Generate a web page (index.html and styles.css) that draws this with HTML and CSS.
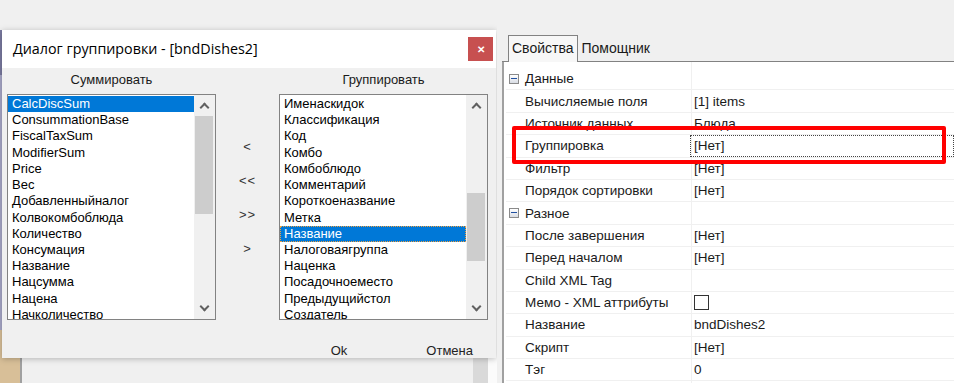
FILE: index.html
```html
<!DOCTYPE html>
<html lang="ru">
<head>
    <meta charset="UTF-8">
    <title>Диалог группировки</title>
    <link rel="stylesheet" href="styles.css">
</head>
<body>
<div class="desk">
    <div class="left-area">
        <div class="back-app">
            <div class="back-side"></div>
            <div class="back-line"></div>
            <div class="back-main"></div>
            <div class="back-scroll"></div>
            <div class="back-gap"></div>
        </div>

        <div class="dialog">
            <div class="dlg-title">
                <span class="dlg-caption">Диалог группировки - [bndDishes2]</span>
                <span class="dlg-close">&#x2715;</span>
            </div>
            <div class="dlg-body">
                <div class="dlg-lists">
                    <div class="list-col">
                        <div class="list-label">Суммировать</div>
                        <div class="listbox">
                            <ul class="items">
                                <li class="selected">CalcDiscSum</li>
                                <li>ConsummationBase</li>
                                <li>FiscalTaxSum</li>
                                <li>ModifierSum</li>
                                <li>Price</li>
                                <li>Вес</li>
                                <li>Добавленныйналог</li>
                                <li>Колвокомбоблюда</li>
                                <li>Количество</li>
                                <li>Консумация</li>
                                <li>Название</li>
                                <li>Нацсумма</li>
                                <li>Нацена</li>
                                <li>Начколичество</li>
                            </ul>
                            <div class="vscroll">
                                <span class="arrow up"></span>
                                <div class="track"><div class="thumb thumb-left"></div></div>
                                <span class="arrow down"></span>
                            </div>
                        </div>
                    </div>

                    <div class="move-btns">
                        <span class="move">&lt;</span>
                        <span class="move">&lt;&lt;</span>
                        <span class="move">&gt;&gt;</span>
                        <span class="move">&gt;</span>
                    </div>

                    <div class="list-col">
                        <div class="list-label">Группировать</div>
                        <div class="listbox">
                            <ul class="items">
                                <li>Именаскидок</li>
                                <li>Классификация</li>
                                <li>Код</li>
                                <li>Комбо</li>
                                <li>Комбоблюдо</li>
                                <li>Комментарий</li>
                                <li>Короткоеназвание</li>
                                <li>Метка</li>
                                <li class="selected focused">Название</li>
                                <li>Налоговаягруппа</li>
                                <li>Наценка</li>
                                <li>Посадочноеместо</li>
                                <li>Предыдущийстол</li>
                                <li>Создатель</li>
                            </ul>
                            <div class="vscroll">
                                <span class="arrow up"></span>
                                <div class="track"><div class="thumb thumb-right"></div></div>
                                <span class="arrow down"></span>
                            </div>
                        </div>
                    </div>
                </div>
                <div class="dlg-buttons">
                    <span class="dlg-btn ok">Ok</span>
                    <span class="dlg-btn cancel">Отмена</span>
                </div>
            </div>
        </div>
    </div>

    <div class="props">
        <div class="tabs">
            <span class="tab active">Свойства</span>
            <span class="tab">Помощник</span>
        </div>
        <div class="grid">
            <div class="row cat"><span class="minus"></span>Данные</div>
            <div class="row"><span class="name">Вычисляемые поля</span><span class="value">[1] items</span></div>
            <div class="row"><span class="name">Источник данных</span><span class="value">Блюда</span></div>
            <div class="row"><span class="name">Группировка</span><span class="value focus">[Нет]</span></div>
            <div class="row"><span class="name">Фильтр</span><span class="value">[Нет]</span></div>
            <div class="row"><span class="name">Порядок сортировки</span><span class="value">[Нет]</span></div>
            <div class="row cat"><span class="minus"></span>Разное</div>
            <div class="row"><span class="name">После завершения</span><span class="value">[Нет]</span></div>
            <div class="row"><span class="name">Перед началом</span><span class="value">[Нет]</span></div>
            <div class="row"><span class="name">Child XML Tag</span><span class="value"></span></div>
            <div class="row"><span class="name">Мемо - XML аттрибуты</span><span class="value"><span class="check"></span></span></div>
            <div class="row"><span class="name">Название</span><span class="value">bndDishes2</span></div>
            <div class="row"><span class="name">Скрипт</span><span class="value">[Нет]</span></div>
            <div class="row"><span class="name">Тэг</span><span class="value">0</span></div>
            <div class="row"><span class="name"></span><span class="value"></span></div>
        </div>
        <div class="highlight"></div>
    </div>
</div>
</body>
</html>
```

FILE: styles.css
```css
* {
    box-sizing: border-box;
}
body {
    margin: 0;
    background-color: #f0f0f0;
    font-family: 'Liberation Sans', Arial, sans-serif;
    font-size: 13px;
    color: #000;
}
.desk {
    display: flex;
    width: 954px;
    height: 383px;
    overflow: hidden;
}

/* application behind the dialog */
.left-area {
    position: relative;
    width: 497px;
    height: 383px;
    flex-shrink: 0;
}
.back-app {
    display: flex;
    height: 100%;
    padding-top: 30px;
}
.back-side {
    width: 20px;
    background: linear-gradient(#7a7aa0 0, #7a7aa0 45px, #a8a8c8 45px, #a8a8c8 300px, #d8bf98 300px);
}
.back-line {
    width: 2px;
    background-color: #a0a0a0;
}
.back-main {
    flex: 1;
    background-color: #f0f0f0;
}
.back-scroll {
    width: 15px;
    background-color: #d9d9d9;
}
.back-gap {
    width: 9px;
    background-color: #fbfbfb;
}

/* dialog window */
.dialog {
    position: absolute;
    left: 2px;
    top: 30px;
    width: 494px;
    height: 328px;
    background-color: #f0f0f0;
    box-shadow: 0 1px 6px rgba(0, 0, 0, 0.25);
    display: flex;
    flex-direction: column;
}
.dlg-title {
    height: 38px;
    background-color: #fff;
    display: flex;
    align-items: center;
    justify-content: space-between;
    padding-left: 11px;
    padding-right: 3px;
}
.dlg-caption {
    font-family: 'Open Sans', 'Liberation Sans', sans-serif;
    font-size: 14.3px;
    margin-top: -1px;
}
.dlg-close {
    width: 25px;
    height: 24px;
    background-color: #c75050;
    color: #fff;
    font-size: 10px;
    font-weight: bold;
    display: flex;
    align-items: center;
    justify-content: center;
}
.dlg-body {
    flex: 1;
    display: flex;
    flex-direction: column;
}
.dlg-lists {
    display: flex;
    padding: 4px 6px 0 5px;
}
.list-col {
    width: 209px;
    display: flex;
    flex-direction: column;
}
.list-label {
    text-align: center;
    height: 22px;
    line-height: 16px;
    color: #1a1a1a;
}
.listbox {
    height: 226px;
    border: 1px solid #828282;
    background-color: #fff;
    display: flex;
    overflow: hidden;
}
.items {
    list-style: none;
    margin: 0;
    padding: 1px 0 0 0;
    flex: 1;
    overflow: hidden;
}
.items li {
    height: 16.23px;
    line-height: 16px;
    padding-left: 4px;
    white-space: nowrap;
}
.items li.selected {
    background-color: #0078d7;
    color: #fff;
}
.items li.focused {
    outline: 1px dotted #f0a040;
    outline-offset: -1px;
}
.vscroll {
    width: 21px;
    background-color: #f0f0f0;
    display: flex;
    flex-direction: column;
    align-items: center;
}
.track {
    flex: 1;
    width: 100%;
    position: relative;
}
.thumb {
    position: absolute;
    left: 1px;
    right: 2px;
    background-color: #cdcdcd;
}
.thumb-left {
    top: 0;
    height: 98px;
}
.thumb-right {
    top: 77px;
    height: 68px;
}
.arrow {
    width: 21px;
    height: 21px;
    display: block;
    position: relative;
}
.arrow::after {
    content: "";
    position: absolute;
    left: 7px;
    width: 5px;
    height: 5px;
    border-left: 2px solid #606060;
    border-top: 2px solid #606060;
}
.arrow.up::after {
    top: 9px;
    transform: rotate(45deg);
}
.arrow.down::after {
    top: 5px;
    transform: rotate(225deg);
}

.move-btns {
    width: 63px;
    display: flex;
    flex-direction: column;
    align-items: center;
    padding-top: 66px;
    gap: 17px;
}
.move {
    height: 17px;
    line-height: 17px;
    color: #333;
    font-size: 13px;
    letter-spacing: 1px;
}

.dlg-buttons {
    display: flex;
    justify-content: flex-end;
    padding: 23px 23px 0 0;
    gap: 79px;
}
.dlg-btn {
    color: #222;
    font-size: 13px;
}

/* property panel */
.props {
    position: relative;
    flex: 1;
    display: flex;
    flex-direction: column;
    padding-top: 35px;
    padding-left: 5px;
    background-color: #f0f0f0;
}
.tabs {
    display: flex;
    flex-shrink: 0;
    padding-left: 6px;
    height: 27px;
    border-bottom: 1px solid #828282;
}
.tab {
    padding: 5px 4px 0 3px;
    font-size: 14px;
    color: #1a1a1a;
}
.tab.active {
    border: 1px solid #828282;
    border-bottom: none;
    background-color: #f7f7f7;
    margin-bottom: -1px;
    padding-top: 4px;
}
.grid {
    flex: 1;
    min-height: 0;
    overflow: hidden;
    background-color: #fff;
    border-left: 2px solid #a0a0a0;
    padding-top: 6px;
    padding-left: 2px;
    background-image: linear-gradient(#f0f0f0, #f0f0f0);
    background-size: 1px 100%;
    background-position: 187px 0;
    background-repeat: no-repeat;
}
.row {
    display: flex;
    align-items: center;
    height: 22.4px;
    border-bottom: 1px solid #f0f0f0;
    font-size: 13.5px;
    color: #1a1a1a;
}
.row .name {
    width: 184px;
    padding-left: 19px;
    flex-shrink: 0;
}
.row .value {
    flex: 1;
    padding-left: 4px;
    height: 100%;
    display: flex;
    align-items: center;
}
.row .value.focus {
    outline: 1px dotted #444;
    outline-offset: -1px;
}
.row.cat {
    padding-left: 3px;
}
.minus {
    width: 10px;
    height: 10px;
    border: 1px solid #8a8a8a;
    background: linear-gradient(#fff, #d8dce4);
    margin-right: 6px;
    position: relative;
}
.minus::after {
    content: "";
    position: absolute;
    left: 1px;
    right: 1px;
    top: 3px;
    height: 1px;
    background-color: #2050a0;
}
.check {
    width: 15px;
    height: 15px;
    border: 1px solid #333;
    background-color: #fff;
}
.highlight {
    position: absolute;
    left: 15px;
    top: 126px;
    width: 434px;
    height: 38px;
    border: 4px solid #ff0000;
    border-radius: 2px;
}
```
